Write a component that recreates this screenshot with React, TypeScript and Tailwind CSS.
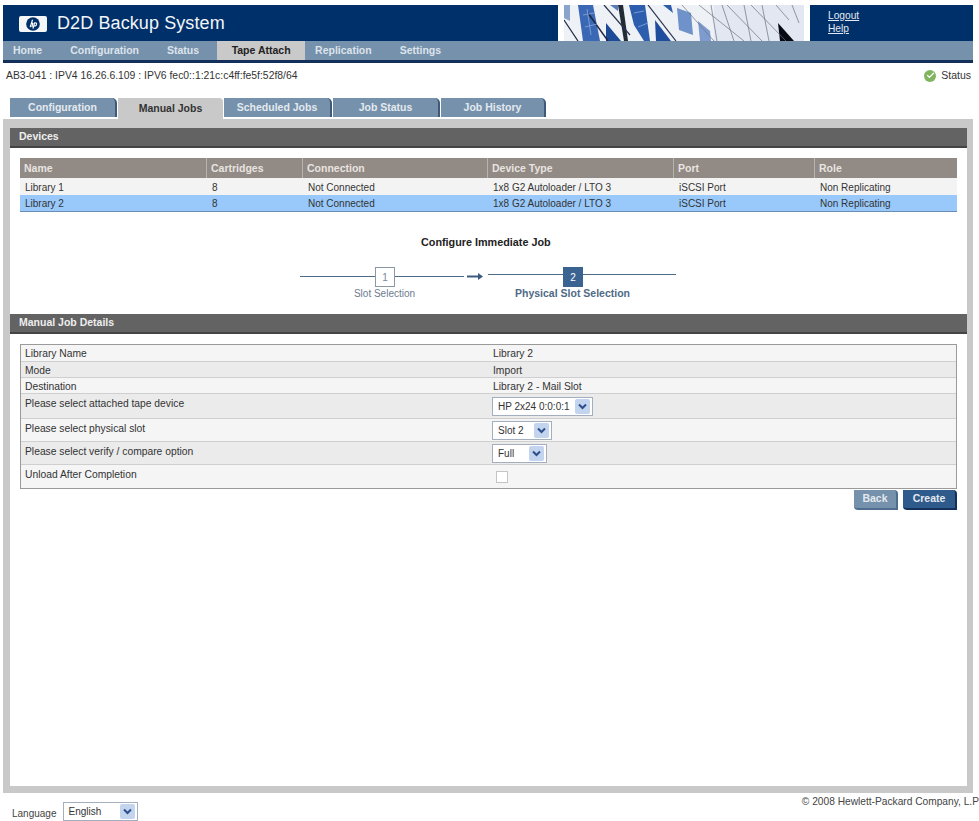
import { Check } from "lucide-react";

const mainNav = ["Home", "Configuration", "Status", "Tape Attach", "Replication", "Settings"];

const tabs = [
  { label: "Configuration", width: "w-[107px]" },
  { label: "Manual Jobs", width: "w-[105px]" },
  { label: "Scheduled Jobs", width: "w-[108px]" },
  { label: "Job Status", width: "w-[107px]" },
  { label: "Job History", width: "w-[105px]" },
];

const deviceCols = ["w-[187px]", "w-[96px]", "w-[185px]", "w-[186px]", "w-[141px]", "flex-1"];
const deviceHeaders = ["Name", "Cartridges", "Connection", "Device Type", "Port", "Role"];
const deviceRows = [
  ["Library 1", "8", "Not Connected", "1x8 G2 Autoloader / LTO 3", "iSCSI Port", "Non Replicating"],
  ["Library 2", "8", "Not Connected", "1x8 G2 Autoloader / LTO 3", "iSCSI Port", "Non Replicating"],
];

function HpLogo() {
  return (
    <div className="w-[28px] h-[16px] bg-[#f4f6f8] rounded-[2px] flex items-center justify-center">
      <svg width="14" height="14" viewBox="0 0 18 18">
        <circle cx="9" cy="9" r="8.8" fill="#00306a" />
        <path d="M8.4 3.5 L5.4 13 M6.4 9.4 Q8.2 7.2 8.8 8.2 L7.6 13 M11.2 7 L9 15 M10.9 8 Q14 6.6 13.6 9.2 Q13 12 10.2 11.2" fill="none" stroke="#fff" strokeWidth="1.5" />
      </svg>
    </div>
  );
}

// Building photo in the banner
function BuildingPhoto() {
  const panes: [string, string][] = [
    ["0,0 6,0 6,16 0,13", "#8ba4cc"],
    ["14,0 29,0 36,36 19,36", "#3a68b4"],
    ["42,18 57,36 42,36", "#1d4a96"],
    ["46,0 54,0 54,6", "#5a7cb8"],
    ["54,0 59,0 64,36 60,36", "#222a35"],
    ["65,0 81,0 86,36 80,36 70,20", "#2d5eae"],
    ["91,15 107,36 92,36", "#1f4d9e"],
    ["99,0 107,0 109,8", "#2f5ca6"],
    ["113,3 127,8 129,30 115,25", "#6f92ca"],
    ["134,16 146,26 147,36 136,36", "#7e9bcf"],
    ["214,18 230,36 216,36", "#070a12"],
  ];
  const wires = [
    [118, 0, 150, 36],
    [135, 0, 180, 36],
    [163, 0, 198, 36],
    [187, 0, 222, 36],
    [212, 0, 225, 15],
    [147, 0, 153, 36],
    [158, 0, 170, 36],
    [180, 0, 187, 36],
    [198, 0, 205, 36],
    [228, 0, 235, 18],
  ];
  return (
    <svg width="240" height="36" viewBox="0 0 240 36" className="block">
      <rect width="240" height="36" fill="#eef1f6" />
      <rect x="150" width="90" height="36" fill="#e2e7f1" />
      {panes.map(([points, fill]) => (
        <polygon key={points} points={points} fill={fill} />
      ))}
      <line x1="0" y1="15" x2="14" y2="36" stroke="#1a2440" strokeWidth="1.2" />
      <line x1="24" y1="8" x2="44" y2="36" stroke="#1a2440" strokeWidth="1.4" />
      <line x1="40" y1="0" x2="66" y2="30" stroke="#26324a" strokeWidth="1.2" />
      <line x1="84" y1="0" x2="112" y2="36" stroke="#26324a" strokeWidth="1.2" />
      <path d="M19 10 L30 8 M21 22 L33 19 M23 4 L27 30 M70 8 L80 6 M74 22 L84 18" stroke="#86a8de" strokeWidth="0.8" fill="none" />
      {wires.map(([x1, y1, x2, y2]) => (
        <line key={`${x1}-${x2}`} x1={x1} y1={y1} x2={x2} y2={y2} stroke="#6a7280" strokeWidth="0.7" />
      ))}
    </svg>
  );
}

function SectionBar({ title }: { title: string }) {
  return (
    <div className="h-[20px] bg-[#636363] border-b-2 border-[#444444] pl-[9px] flex items-center text-[10.5px] font-bold text-[#eeeeee]">
      {title}
    </div>
  );
}

function FakeSelect({ value, width }: { value: string; width: string }) {
  return (
    <div className={`${width} h-[19px] bg-white border border-[#a3afbf] flex items-center justify-between pl-[5px] pr-[2px] text-[10px] text-[#333333]`}>
      <span>{value}</span>
      <span className="w-[15px] h-[15px] bg-[#c3d4ef] rounded-[2px] flex items-center justify-center">
        <svg width="9" height="7" viewBox="0 0 9 7">
          <path d="M1 1.5 L4.5 5 L8 1.5" fill="none" stroke="#2c4f8c" strokeWidth="2" />
        </svg>
      </span>
    </div>
  );
}

function DetailRow({ label, alt, height, pad, children }: { label: string; alt: boolean; height: string; pad: string; children: React.ReactNode }) {
  return (
    <div className={`${height} ${alt ? "bg-[#ebebeb]" : "bg-[#f5f5f5]"} border-b border-[#cfcfcf] last:border-b-0 flex items-start text-[10.3px] leading-[15px] text-[#333333]`}>
      <div className={`w-[472px] pl-[4px] ${pad}`}>{label}</div>
      <div className={`flex-1 ${pad}`}>{children}</div>
    </div>
  );
}

export default function App() {
  return (
    <div className="w-[979px] h-[821px] overflow-hidden bg-white pt-[5px] font-['Liberation_Sans',Arial,sans-serif]">
      <div className="ml-[3px] w-[970px]">
        {/* banner */}
        <div className="h-[36px] bg-[#00306a] flex items-center">
          <div className="ml-[16px] mr-[10px] pt-[1px]">
            <HpLogo />
          </div>
          <span className="text-[18px] text-[#f2f5f9] tracking-[0.1px]">D2D Backup System</span>
          <div className="ml-auto w-[252px] h-[36px] bg-white flex justify-center">
            <BuildingPhoto />
          </div>
          <div className="w-[163px] pl-[18px] pb-[2px] flex flex-col text-[10.2px] leading-[13px] text-[#e4e9f0] underline">
            <span>Logout</span>
            <span>Help</span>
          </div>
        </div>

        {/* main nav */}
        <div className="h-[22px] bg-[#7591ab] border-b-[3px] border-[#12305a] flex pl-[10px] text-[10.5px] font-bold text-[#dde4ec]">
          {mainNav.map((item) =>
            item === "Tape Attach" ? (
              <div key={item} className="h-[19px] w-[88px] -ml-[10px] mr-[10px] bg-[#c9c9c9] text-[#222222] flex items-center justify-center">
                {item}
              </div>
            ) : (
              <div key={item} className="h-[19px] mr-[28px] flex items-center">
                {item}
              </div>
            ),
          )}
        </div>

        {/* status line */}
        <div className="h-[25px] flex items-center justify-between pl-[3px] text-[10.4px] text-[#333333]">
          <span>AB3-041 : IPV4 16.26.6.109 : IPV6 fec0::1:21c:c4ff:fe5f:52f8/64</span>
          <span className="flex items-center gap-[5px] pr-[2px] text-[10.5px]">
            <span className="w-[12px] h-[12px] rounded-full bg-[#7fb55e] flex items-center justify-center">
              <Check size={9} strokeWidth={3.5} color="#ffffff" />
            </span>
            Status
          </span>
        </div>

        {/* tabs */}
        <div className="mt-[10px] h-[21px] pl-[7px] flex items-start">
          {tabs.map((t) =>
            t.label === "Manual Jobs" ? (
              <div key={t.label} className={`${t.width} h-[21px] mr-[1px] bg-[#c9c9c9] text-[#333333] rounded-tr-[4px] text-[10.5px] font-bold flex items-center justify-center`}>
                {t.label}
              </div>
            ) : (
              <div key={t.label} className={`${t.width} h-[19px] mr-[1px] bg-[#7591ab] border-r-2 border-[#3f5a78] rounded-tr-[5px] text-[10.5px] font-bold text-[#e4e9ef] flex items-center justify-center`}>
                {t.label}
              </div>
            ),
          )}
        </div>

        {/* content panel */}
        <div className="h-[674px] bg-[#c9c9c9] pt-[9px] pl-[7px] pr-[6px] pb-[7px]">
          <div className="h-full bg-white">
            <SectionBar title="Devices" />

            <div className="mt-[10px] mx-[10px]">
              <div className="h-[20px] bg-[#928a84] flex text-[10.5px] font-bold text-[#e8e4e0]">
                {deviceHeaders.map((h, i) => (
                  <div key={h} className={`${deviceCols[i]} pl-[4px] pt-[1px] border-r border-[#b8b2ad] flex items-center last:border-r-0`}>
                    {h}
                  </div>
                ))}
              </div>
              {deviceRows.map((row, r) => (
                <div key={row[0]} className={`h-[17px] flex text-[10px] text-[#333333] ${r === 1 ? "bg-[#99c9fb] border-b border-[#6a8db3]" : "bg-[#f3f3f3]"}`}>
                  {row.map((cell, i) => (
                    <div key={i} className={`${deviceCols[i]} pl-[5px] pt-[1px] flex items-center`}>
                      {cell}
                    </div>
                  ))}
                </div>
              ))}
            </div>

            {/* wizard */}
            <div className="mt-[22px] ml-[411px] w-[131px] whitespace-nowrap text-[10.8px] font-bold text-[#222222]">Configure Immediate Job</div>
            <div className="mt-[17px] ml-[290px] h-[34px] flex items-start">
              <div className="w-[164px]">
                <div className="flex items-start h-[20px]">
                  <div className="w-[75px] h-px mt-[9px] bg-[#4f6a86]" />
                  <div className="w-[20px] h-[20px] border border-[#8a97a6] text-[10px] text-[#7a8797] flex items-center justify-center">1</div>
                  <div className="flex-1 h-px mt-[9px] bg-[#4f6a86]" />
                </div>
                <div className="-mt-[1px] w-[169px] text-center leading-[15px] text-[10px] text-[#6d7c8e]">Slot Selection</div>
              </div>
              <svg width="24" height="20" viewBox="0 0 24 20" className="shrink-0">
                <path d="M3 9.5 H16" stroke="#3c5a80" strokeWidth="2" fill="none" />
                <path d="M14 6 L19 9.5 L14 13 Z" fill="#3c5a80" />
              </svg>
              <div className="w-[188px]">
                <div className="flex items-start h-[20px]">
                  <div className="w-[75px] h-px mt-[7px] bg-[#4f6a86]" />
                  <div className="w-[20px] h-[20px] bg-[#3a6391] text-[10px] text-white flex items-center justify-center">2</div>
                  <div className="flex-1 h-px mt-[7px] bg-[#4f6a86]" />
                </div>
                <div className="-mt-[1px] w-[169px] text-center leading-[15px] text-[10.5px] font-bold text-[#4f6a86] whitespace-nowrap">Physical Slot Selection</div>
              </div>
            </div>

            <div className="mt-[13px]">
              <SectionBar title="Manual Job Details" />
            </div>

            <div className="mt-[10px] mx-[10px] border border-[#9a9a9a]">
              <DetailRow label="Library Name" alt={false} height="h-[17px]" pad="pt-[1px]">Library 2</DetailRow>
              <DetailRow label="Mode" alt={true} height="h-[16px]" pad="pt-[1px]">Import</DetailRow>
              <DetailRow label="Destination" alt={false} height="h-[16px]" pad="pt-[1px]">Library 2 - Mail Slot</DetailRow>
              <DetailRow label="Please select attached tape device" alt={true} height="h-[25px]" pad="pt-[2px]">
                <div className="-ml-[1px] pt-[1px]">
                  <FakeSelect value="HP 2x24 0:0:0:1" width="w-[101px]" />
                </div>
              </DetailRow>
              <DetailRow label="Please select physical slot" alt={false} height="h-[23px]" pad="pt-[2px]">
                <div className="-ml-[1px]">
                  <FakeSelect value="Slot 2" width="w-[60px]" />
                </div>
              </DetailRow>
              <DetailRow label="Please select verify / compare option" alt={true} height="h-[23px]" pad="pt-[2px]">
                <div className="-ml-[1px]">
                  <FakeSelect value="Full" width="w-[55px]" />
                </div>
              </DetailRow>
              <DetailRow label="Unload After Completion" alt={false} height="h-[23px]" pad="pt-[2px]">
                <span className="block ml-[3px] mt-[4px] w-[12px] h-[12px] bg-white border border-[#c4c4c4]" />
              </DetailRow>
            </div>

            <div className="mt-[1px] mr-[10px] flex justify-end gap-[5px]">
              <div className="w-[44px] h-[20px] bg-[#7591ab] border-r-2 border-b-2 border-[#4f6d8c] rounded-tr-[4px] rounded-bl-[4px] text-[10.5px] font-bold text-[#e4e9ef] flex items-center justify-center">Back</div>
              <div className="w-[54px] h-[20px] bg-[#2f5a8c] border-r-2 border-b-2 border-[#12305a] rounded-tr-[4px] rounded-bl-[4px] text-[10.5px] font-bold text-[#e4e9ef] flex items-center justify-center">Create</div>
            </div>
          </div>
        </div>

        {/* footer */}
        <div className="relative h-[28px] text-[10px] text-[#444444]">
          <div className="pt-[9px] pl-[9px] flex items-center gap-[6px]">
            <span className="pt-[4px]">Language</span>
            <div className="-mt-[1px]">
              <FakeSelect value="English" width="w-[75px]" />
            </div>
          </div>
          <span className="absolute top-[1px] right-[-6px] text-[10.2px] whitespace-nowrap">© 2008 Hewlett-Packard Company, L.P</span>
        </div>
      </div>
    </div>
  );
}
